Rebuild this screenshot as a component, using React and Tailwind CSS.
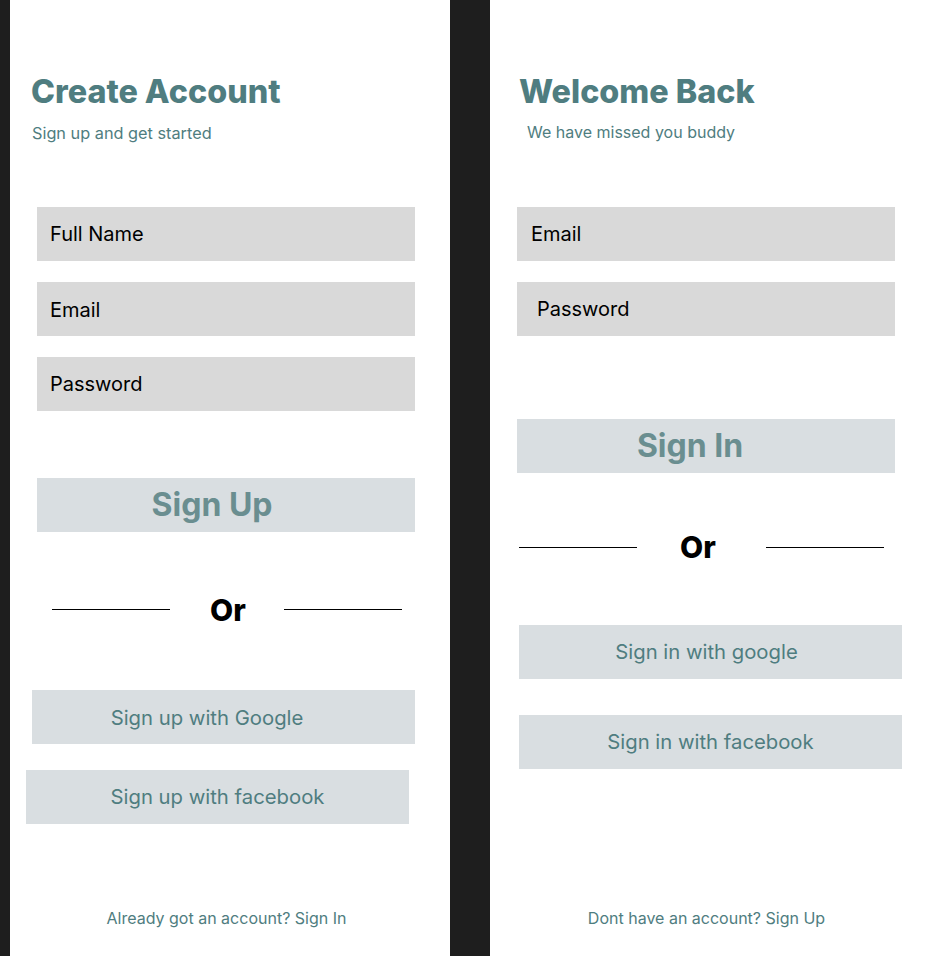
import React from 'react';

const font = { fontFamily: 'Inter, "Noto Sans", sans-serif' };

function Field({label, className}) {
  return (
    <div className={`h-[54px] w-[378px] bg-[#d9d9d9] flex items-center text-[20px] leading-none text-black ${className}`}>
      {label}
    </div>
  );
}

function Action({children, className}) {
  return (
    <div className={`h-[54px] bg-[#d9dee1] flex items-center justify-center leading-none ${className}`}>
      {children}
    </div>
  );
}

function Divider({className, orClass}) {
  return (
    <div className={`flex items-center ${className}`}>
      <div className="w-[118px] h-px bg-black" />
      <span className={`text-[30px] leading-none font-extrabold text-black ${orClass}`}>Or</span>
      <div className="w-[118px] h-px bg-black" />
    </div>
  );
}

export default function App() {
  return (
    <div className="flex h-[956px] w-[930px] bg-[#1e1e1e] pl-[10px] gap-[40px] overflow-hidden" style={font}>
      {/* sign up panel */}
      <div className="w-[440px] h-full bg-white flex flex-col items-start">
        <h1 className="mt-[76px] ml-[21px] text-[32.3px] leading-none font-extrabold text-[#4f7d80]">Create Account</h1>
        <p className="mt-[17px] ml-[22px] text-[16.3px] leading-none text-[#4f7d80]">Sign up and get started</p>

        <Field label="Full Name" className="mt-[65px] ml-[27px] pl-[13px]" />
        <Field label="Email" className="mt-[21px] ml-[27px] pl-[13px] pt-[3px]" />
        <Field label="Password" className="mt-[21px] ml-[27px] pl-[13px]" />

        <Action className="mt-[67px] ml-[27px] w-[378px] pr-[28px] text-[32px] font-bold text-[#6a8e90]">Sign Up</Action>

        <Divider className="mt-[63px] ml-[42px]" orClass="ml-[40px] mr-[38px]" />

        <Action className="mt-[65px] ml-[22px] w-[383px] pr-[33px] pt-[4px] text-[20.3px] text-[#4f7d80]">Sign up with Google</Action>
        <Action className="mt-[26px] ml-[16px] w-[383px] pt-[2px] text-[20.3px] text-[#4f7d80]">Sign up with facebook</Action>

        <p className="mt-[86px] w-full pr-[7px] text-center text-[16px] leading-none text-[#4f7d80]">Already got an account? Sign In</p>
      </div>

      {/* sign in panel */}
      <div className="w-[440px] h-full bg-white flex flex-col items-start">
        <h1 className="mt-[76px] ml-[29px] text-[32.3px] leading-none font-extrabold text-[#4f7d80]">Welcome Back</h1>
        <p className="mt-[16px] ml-[37px] text-[16px] leading-none text-[#4f7d80]">We have missed you buddy</p>

        <Field label="Email" className="mt-[67px] ml-[27px] pl-[14px]" />
        <Field label="Password" className="mt-[21px] ml-[27px] pl-[20px]" />

        <Action className="mt-[83px] ml-[27px] w-[378px] pr-[32px] text-[32px] font-bold text-[#6a8e90]">Sign In</Action>

        <Divider className="mt-[59px] ml-[29px]" orClass="ml-[43px] mr-[50px]" />

        <Action className="mt-[63px] ml-[29px] w-[383px] pr-[8px] text-[20.3px] text-[#4f7d80]">Sign in with google</Action>
        <Action className="mt-[36px] ml-[29px] w-[383px] text-[20.3px] text-[#4f7d80]">Sign in with facebook</Action>

        <p className="mt-[141px] w-full pr-[7px] text-center text-[16px] leading-none text-[#4f7d80]">Dont have an account? Sign Up</p>
      </div>
    </div>
  );
}
